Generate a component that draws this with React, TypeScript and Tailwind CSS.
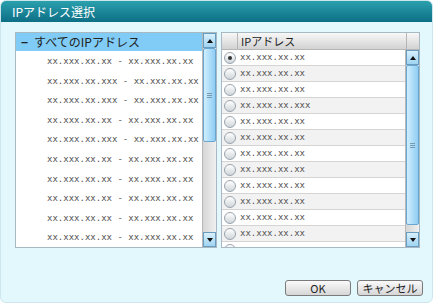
import React from "react";

const ranges = [
  "xx.xxx.xx.xx - xx.xxx.xx.xx",
  "xx.xxx.xx.xxx - xx.xxx.xx.xx",
  "xx.xxx.xx.xxx - xx.xxx.xx.xx",
  "xx.xxx.xx.xx - xx.xxx.xx.xx",
  "xx.xxx.xx.xxx - xx.xxx.xx.xx",
  "xx.xxx.xx.xx - xx.xxx.xx.xx",
  "xx.xxx.xx.xx - xx.xxx.xx.xx",
  "xx.xxx.xx.xx - xx.xxx.xx.xx",
  "xx.xxx.xx.xx - xx.xxx.xx.xx",
  "xx.xxx.xx.xx - xx.xxx.xx.xx",
];

const ips = [
  "xx.xxx.xx.xx",
  "xx.xxx.xx.xx",
  "xx.xxx.xx.xx",
  "xx.xxx.xx.xxx",
  "xx.xxx.xx.xx",
  "xx.xxx.xx.xx",
  "xx.xxx.xx.xx",
  "xx.xxx.xx.xx",
  "xx.xxx.xx.xx",
  "xx.xxx.xx.xx",
  "xx.xxx.xx.xx",
  "xx.xxx.xx.xx",
  "",
];

const jp = { fontFamily: '"Noto Sans CJK JP", "Noto Sans", sans-serif' };
const mono = { fontFamily: '"DejaVu Sans Mono", "Liberation Mono", monospace' };

function Arrow({ up }: { up?: boolean }) {
  return (
    <div className="h-[15px] w-full bg-gradient-to-b from-[#d8f0fc] to-[#9fd4f2] border border-[#6a9cc0] flex items-center justify-center">
      <svg width="6" height="4" viewBox="0 0 6 4">
        <path d={up ? "M0 4 L3 0 L6 4 Z" : "M0 0 L3 4 L6 0 Z"} fill="#111" />
      </svg>
    </div>
  );
}

function ScrollBar({ thumbTop, thumbHeight }: { thumbTop: number; thumbHeight: number }) {
  return (
    <div className="w-[14px] h-full flex flex-col bg-[#e8e8e8] border-l border-[#b8b8b8]">
      <Arrow up />
      <div className="flex-1 relative bg-gradient-to-r from-[#d6d6d6] to-[#f0f0f0]">
        <div
          className="absolute left-0 right-0 bg-gradient-to-r from-[#cfeefe] to-[#8fcdf3] border border-[#6aa6d0] rounded-[2px] flex items-center justify-center"
          style={{ top: thumbTop, height: thumbHeight }}
        >
          <div className="w-[5px] flex flex-col gap-[1px]">
            <div className="h-px bg-[#7a9ab0]" />
            <div className="h-px bg-[#7a9ab0]" />
            <div className="h-px bg-[#7a9ab0]" />
          </div>
        </div>
      </div>
      <Arrow />
    </div>
  );
}

function Radio({ checked }: { checked?: boolean }) {
  return (
    <div className="w-[12px] h-[12px] rounded-full border border-[#9aa4ac] bg-gradient-to-b from-[#ffffff] to-[#cfd6dc] flex items-center justify-center shrink-0">
      {checked && <div className="w-[4px] h-[4px] rounded-full bg-[#333]" />}
    </div>
  );
}

export default function App() {
  return (
    <div className="w-[435px] h-[308px] bg-white relative overflow-hidden">
      <div className="w-[433px] h-[303px] rounded-[6px] overflow-hidden bg-[#e3f8fd] border border-[#cde6ee] flex flex-col">
        <div
          className="h-[21px] bg-gradient-to-b from-[#2aa0ad] to-[#0d6f86] text-white text-[12px] leading-[21px] pl-[11px]"
          style={jp}
        >
          IPアドレス選択
        </div>

        <div className="flex gap-[4px] mt-[10px] ml-[14px] h-[216px]">
          {/* left tree */}
          <div className="w-[202px] h-full flex bg-white border border-[#a9b9c2]">
            <div className="flex-1 flex flex-col overflow-hidden">
              <div
                className="h-[21px] bg-[#80ccf6] flex items-center pl-[5px] text-[12px] text-[#222]"
                style={jp}
              >
                <span className="font-bold mr-[6px]">−</span>すべてのIPアドレス
              </div>
              <div className="flex flex-col pt-[1px]">
                {ranges.map((r, i) => (
                  <div
                    key={i}
                    className="h-[19.6px] leading-[19.6px] pl-[31px] text-[9px] text-[#555] whitespace-nowrap"
                    style={mono}
                  >
                    {r}
                  </div>
                ))}
              </div>
            </div>
            <ScrollBar thumbTop={0} thumbHeight={94} />
          </div>

          {/* right list */}
          <div className="w-[199px] h-full flex flex-col bg-white border border-[#a9b9c2]">
            <div className="h-[17px] flex bg-gradient-to-b from-[#f8f8f8] to-[#d2d2d2] border-b border-[#b5b5b5]">
              <div className="w-[16px] border-r border-[#b5b5b5]" />
              <div className="flex-1 text-[11px] leading-[17px] pl-[3px] text-[#222]" style={jp}>
                IPアドレス
              </div>
              <div className="w-[13px] border-l border-[#b5b5b5]" />
            </div>
            <div className="flex-1 flex overflow-hidden">
              <div className="flex-1 flex flex-col overflow-hidden">
                {ips.map((ip, i) => (
                  <div
                    key={i}
                    className={`h-[16px] shrink-0 flex items-center gap-[4px] pl-[2px] border-b border-[#d4d4d4] ${
                      i % 2 === 1 ? "bg-[#f2f2f2]" : "bg-white"
                    }`}
                  >
                    <Radio checked={i === 0} />
                    <span className="text-[9px] text-[#555]" style={mono}>
                      {ip}
                    </span>
                  </div>
                ))}
              </div>
              <ScrollBar thumbTop={0} thumbHeight={160} />
            </div>
          </div>
        </div>

        <div className="flex justify-end gap-[6px] mt-[32px] pr-[9px]">
          <button
            className="w-[66px] h-[16px] rounded-[3px] border border-[#7a7a7a] bg-gradient-to-b from-[#fafafa] to-[#d6d6d6] text-[11px] leading-[14px] text-[#222]"
            style={jp}
          >
            OK
          </button>
          <button
            className="w-[66px] h-[16px] rounded-[3px] border border-[#7a7a7a] bg-gradient-to-b from-[#fafafa] to-[#d6d6d6] text-[11px] leading-[14px] text-[#222]"
            style={jp}
          >
            キャンセル
          </button>
        </div>
      </div>
    </div>
  );
}
